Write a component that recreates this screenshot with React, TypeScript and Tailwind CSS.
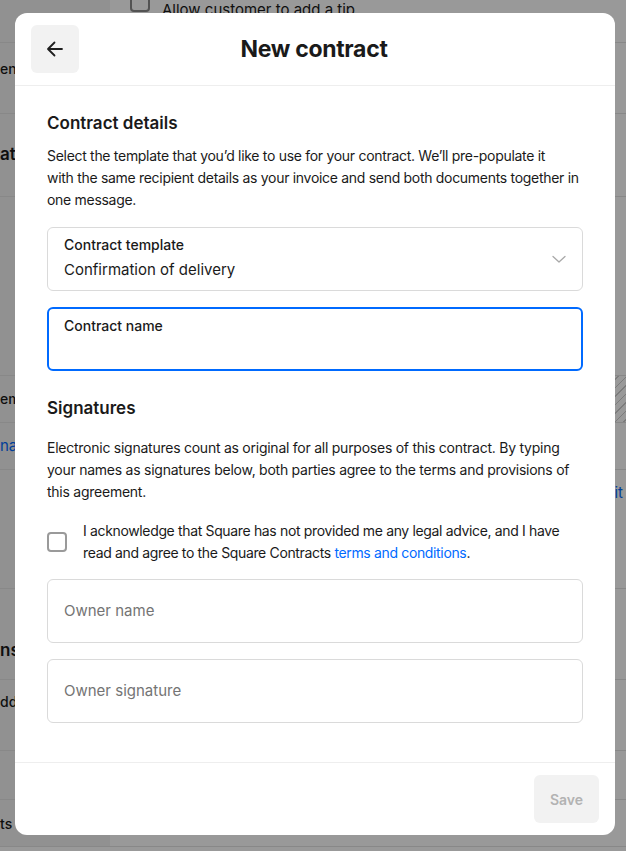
import React from 'react';

const rows = [
  { h: 'h-[43px]', left: '', right: 'tip' },
  { h: 'h-[71px]', left: 'ent details', right: '', pt: 'pt-[16px]' },
  { h: 'h-[83px]', left: 'ations', right: '', bold: true, pt: 'pt-[29px]' },
  { h: 'h-[179px]', left: '', right: '' },
  { h: 'h-[47px]', left: 'email', right: '', hatch: true, pt: 'pt-[13px]' },
  { h: 'h-[47px]', left: 'nal', right: '', link: true, pt: 'pt-[13px]' },
  { h: 'h-[119px]', left: '', right: 'edit' },
  { h: 'h-[91px]', left: 'ns', right: '', bold: true, pt: 'pt-[50px]' },
  { h: 'h-[71px]', left: 'ddress', right: '', pt: 'pt-[12px]' },
  { h: 'h-[49px]', left: '', right: '' },
  { h: 'h-[47px]', left: 'ts', right: '', pt: 'pt-[14px]' },
];

function Background() {
  return (
    <div className="flex flex-col w-full bg-white">
      {rows.map((r, i) => (
        <div key={i} className={`flex ${r.h} border-b border-[#e3e3e3]`}>
          <div className={`w-[110px] shrink-0 bg-[#f2f2f2] overflow-hidden ${r.pt ?? ''}`}>
            {r.left && (
              <div
                className={
                  r.link
                    ? 'text-[15px] leading-[20px] text-[#006aff] whitespace-nowrap'
                    : r.bold
                    ? 'text-[17px] leading-[22px] font-semibold text-[#1a1a1a] whitespace-nowrap'
                    : 'text-[14px] leading-[20px] font-medium text-[#1a1a1a] whitespace-nowrap'
                }
              >
                {r.left}
              </div>
            )}
          </div>
          <div
            className={`flex-1 relative ${r.hatch ? 'bg-[repeating-linear-gradient(135deg,#ffffff_0px,#ffffff_5px,#cfcfcf_5px,#cfcfcf_6px)]' : ''}`}
          >
            {r.right === 'tip' && (
              <div className="flex items-start gap-3 pl-[20px] -mt-[10px]">
                <div className="w-[20px] h-[22px] border-2 border-[#8a8a8a] rounded-[4px] bg-white" />
                <span className="text-[15px] text-[#1a1a1a] mt-[9px]">Allow customer to add a tip</span>
              </div>
            )}
            {r.right === 'edit' && (
              <div className="absolute right-[3px] top-[12px] text-[15px] text-[#006aff]">Edit</div>
            )}
          </div>
        </div>
      ))}
    </div>
  );
}

function Field({ label, value, placeholder, focused, chevron }: { label?: string; value?: string; placeholder?: string; focused?: boolean; chevron?: boolean }) {
  return (
    <div
      className={`relative h-[64px] rounded-[6px] bg-white flex flex-col ${
        focused ? 'border-2 border-[#006aff] px-[15px] pt-[8px] justify-start' : 'border border-[#dadada] px-[16px] justify-center'
      }`}
    >
      {label && <div className="text-[14px] font-medium text-[#1a1a1a] leading-[18px]">{label}</div>}
      {value && <div className="text-[15px] text-[#1a1a1a] leading-[24px] mt-[4px]">{value}</div>}
      {placeholder && <div className="text-[15px] text-[#747474] leading-[24px]">{placeholder}</div>}
      {chevron && (
        <svg className="absolute right-[15px] top-[23px]" width="16" height="16" viewBox="0 0 16 16" fill="none">
          <path d="M2 5.5L8 11L14 5.5" stroke="#a8a8a8" strokeWidth="1.3" strokeLinecap="round" strokeLinejoin="round" />
        </svg>
      )}
    </div>
  );
}

export default function App() {
  return (
    <div className="relative w-[626px] h-[851px] overflow-hidden" style={{ fontFamily: 'Inter, "Noto Sans", sans-serif' }}>
      <Background />
      <div className="absolute inset-0 bg-black/40" />
      <div className="absolute left-[15px] top-[13px] w-[600px] h-[822px] bg-white rounded-[12px] flex flex-col overflow-hidden">
        {/* header */}
        <div className="relative h-[73px] shrink-0 border-b border-[#eeeeee] flex items-center justify-center">
          <button className="absolute left-[16px] top-[12px] w-[48px] h-[48px] rounded-[6px] bg-[#f2f2f2] flex items-center justify-center">
            <svg width="20" height="20" viewBox="0 0 20 20" fill="none">
              <path d="M17 10H3.5M9.5 3.5L3 10L9.5 16.5" stroke="#1f1f1f" strokeWidth="1.8" strokeLinecap="round" strokeLinejoin="round" />
            </svg>
          </button>
          <h1 className="text-[23px] font-bold text-[#1a1a1a] tracking-[-0.3px] ml-[-2px]">New contract</h1>
        </div>

        {/* body */}
        <div className="flex-1 px-[32px] pt-[26px]">
          <h2 className="text-[17px] font-semibold text-[#1a1a1a] leading-[22px]">Contract details</h2>
          <p className="mt-[11px] text-[14px] text-[#1a1a1a] leading-[22px] tracking-[-0.3px]">
            Select the template that you’d like to use for your contract. We’ll pre-populate it
            <br />
            with the same recipient details as your invoice and send both documents together in one message.
          </p>
          <div className="mt-[16px] flex flex-col gap-[16px]">
            <Field label="Contract template" value="Confirmation of delivery" chevron />
            <Field label="Contract name" focused />
          </div>

          <h2 className="mt-[26px] text-[17px] font-semibold text-[#1a1a1a] leading-[22px]">Signatures</h2>
          <p className="mt-[18px] text-[14px] text-[#1a1a1a] leading-[22px] tracking-[-0.25px]">
            Electronic signatures count as original for all purposes of this contract. By typing your names as signatures below, both parties agree to the terms and provisions of this agreement.
          </p>

          <div className="mt-[17px] flex items-center gap-[16px]">
            <div className="w-[20px] h-[20px] shrink-0 rounded-[4px] border-2 border-[#9a9a9a] bg-white" />
            <p className="text-[14px] text-[#1a1a1a] leading-[22px] tracking-[-0.35px]">
              I acknowledge that Square has not provided me any legal advice, and I have read and agree to the Square Contracts{' '}
              <span className="text-[#006aff]">terms and conditions</span>.
            </p>
          </div>

          <div className="mt-[15px] flex flex-col gap-[16px]">
            <Field placeholder="Owner name" />
            <Field placeholder="Owner signature" />
          </div>
        </div>

        {/* footer */}
        <div className="h-[73px] shrink-0 border-t border-[#eeeeee] flex items-center justify-end px-[16px]">
          <button className="w-[65px] h-[48px] rounded-[6px] bg-[#f2f2f2] text-[14px] font-semibold text-[#b3b3b3]">Save</button>
        </div>
      </div>
    </div>
  );
}
